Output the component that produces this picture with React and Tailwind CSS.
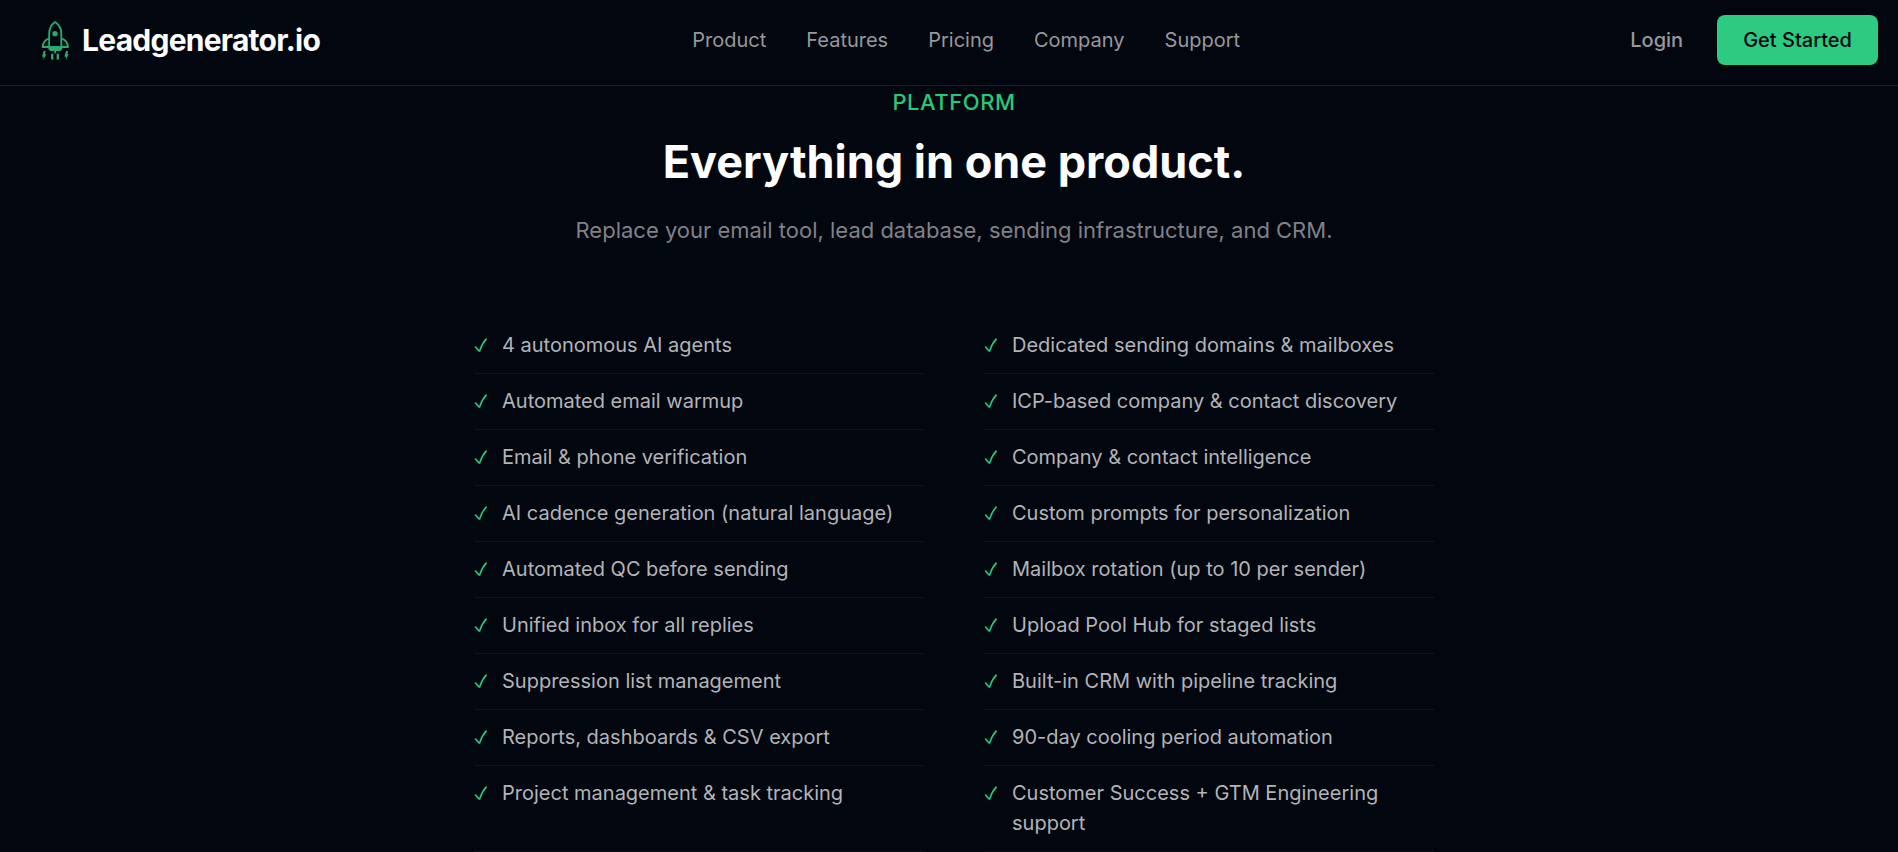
const NAV_LINKS = ['Product', 'Features', 'Pricing', 'Company', 'Support'];

const FEATURES = [
  '4 autonomous AI agents',
  'Dedicated sending domains & mailboxes',
  'Automated email warmup',
  'ICP-based company & contact discovery',
  'Email & phone verification',
  'Company & contact intelligence',
  'AI cadence generation (natural language)',
  'Custom prompts for personalization',
  'Automated QC before sending',
  'Mailbox rotation (up to 10 per sender)',
  'Unified inbox for all replies',
  'Upload Pool Hub for staged lists',
  'Suppression list management',
  'Built-in CRM with pipeline tracking',
  'Reports, dashboards & CSV export',
  '90-day cooling period automation',
  'Project management & task tracking',
  'Customer Success + GTM Engineering support',
];

function RocketLogo() {
  return (
    <svg viewBox="33 57 87 123" className="w-[29px] h-[41px] shrink-0" fill="none" aria-hidden="true">
      {/* Body and fins */}
      <g stroke="#2aa870" strokeWidth="5.5" strokeLinejoin="round">
        <path d="M57.5 138V98C57.5 82 66 69 75 63C84 69 94 82 94 98V138Z" />
        <path d="M57 113C47 116 39 125 38 138H57" />
        <path d="M95 113C105 116 113 125 114 138H95" />
      </g>
      <circle cx="75" cy="98" r="8" fill="#2aa870" />
      {/* Exhaust */}
      <g fill="#2aa870">
        <path d="M55 138H97V145L91 150H78V157H73V150H61L55 145Z" />
        <path d="M63 160L70 157V177L63 174Z" />
        <path d="M80 157L87 160V174L80 177Z" />
        <path d="M41 150H47L45 160H49L40 178L41 167H36Z" />
        <path d="M108 150H114L112 160H116L107 178L108 167H103Z" />
      </g>
    </svg>
  );
}

function Check() {
  return (
    <svg viewBox="0 0 14 30" className="w-[14px] h-[30px] shrink-0" fill="none" aria-hidden="true">
      <path d="M1.2 16.4L5 21L5.6 21C7 16.6 9.2 12.2 12.6 8.6" stroke="#26c97c" strokeWidth="1.6" />
    </svg>
  );
}

function Header() {
  return (
    <header className="flex items-center justify-between border-b border-[#1b1f28] pt-[15px] pb-5 pl-[41px] pr-5">
      <a href="#" className="flex items-center gap-3 text-white">
        <RocketLogo />
        <span className="text-[30px] leading-[40px] font-bold tracking-tight">Leadgenerator.io</span>
      </a>

      <nav className="flex items-center gap-10 text-[20px] leading-[30px] text-[#97989c]">
        {NAV_LINKS.map((label) => (
          <a key={label} href="#">
            {label}
          </a>
        ))}
      </nav>

      <div className="flex items-center gap-4 text-[20px] leading-[30px] font-medium">
        <a href="#" className="px-[18px] text-[#97989c]">
          Login
        </a>
        <button type="button" className="rounded-lg bg-[#2dca82] px-[26px] py-[10px] text-[#02060f]">
          Get Started
        </button>
      </div>
    </header>
  );
}

export default function App() {
  return (
    <div className="min-h-screen bg-[#02060f] font-['Inter',sans-serif]">
      <Header />

      <main className="pl-[10px]">
        {/* Intro */}
        <section className="flex flex-col items-center text-center">
          <p className="text-[22px] leading-[32px] font-medium tracking-wide text-[#26c97c]">PLATFORM</p>
          <h2 className="mt-4 text-[45px] leading-[56px] font-bold text-white">
            Everything in one product.
          </h2>
          <p className="mt-6 text-[22px] leading-[32px] text-[#808287]">
            Replace your email tool, lead database, sending infrastructure, and CRM.
          </p>
        </section>

        {/* Feature checklist */}
        <ul className="mx-auto mt-[72px] grid max-w-[960px] grid-cols-2 gap-x-[60px]">
          {FEATURES.map((feature) => (
            <li
              key={feature}
              className="flex items-start gap-[14px] border-b border-[#10141d] pt-3 pb-[13px] text-[20px] leading-[30px] text-[#b3b4b7]"
            >
              <Check />
              <span>{feature}</span>
            </li>
          ))}
        </ul>
      </main>
    </div>
  );
}
